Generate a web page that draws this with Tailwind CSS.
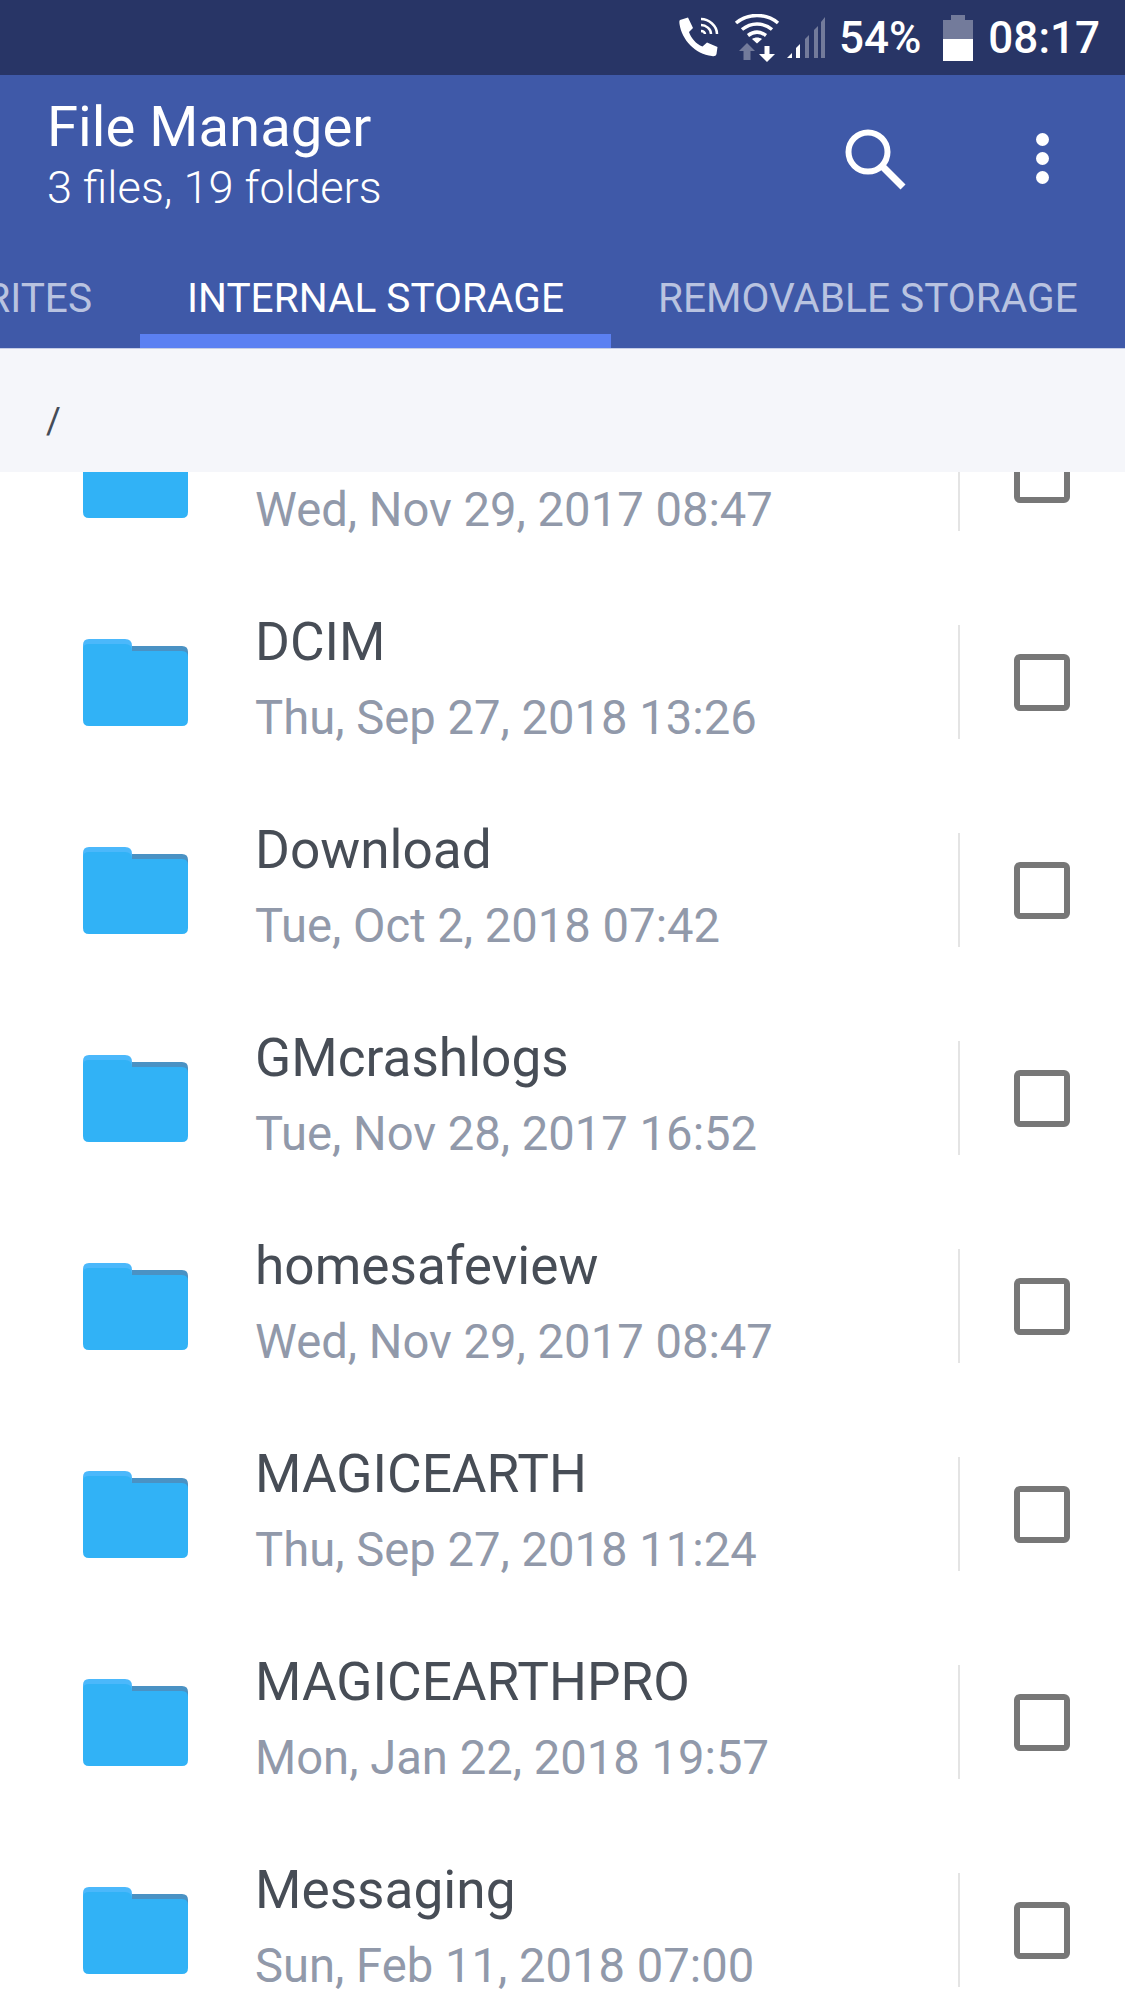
<!doctype html>
<html lang="en">
  <head>
    <meta charset="UTF-8" />
    <title>File Manager</title>
    <script src="https://cdn.jsdelivr.net/npm/@tailwindcss/browser@4"></script>
  </head>
  <body>
    <div class="flex flex-col h-[2000px] overflow-hidden bg-white font-['Roboto',sans-serif]">
      <div class="flex items-center justify-end h-[75px] shrink-0 bg-[#283566] text-white pr-[25px]">
        <svg class="w-[40px] h-[40px] mt-[-1px]" viewBox="0 0 40 40" fill="none">
          <path fill="#fff" d="M1 3 L9 0.5 L14 11 L10 15 C12 21 17 27 23.5 29.5 L28 25.5 L38.5 30 L37.5 37 C37 39 35 39.5 33 39 C16 37 3 23 0.5 7 C0.4 5 0 4 1 3 Z" />
          <path stroke="#fff" stroke-width="2.5" d="M22 2 C30 2 38 9 38 17 M22 8 C27 8 32 12 32 17 M22 14 C24.500 14 26 15.500 26 17" />
        </svg>
        <svg class="w-[46px] h-[48px] ml-[15px]" viewBox="0 0 46 48" fill="none">
          <path stroke="#fff" stroke-width="3.500" d="M2 9 C14 -1 32 -1 44 9 M8 15.500 C17 8 29 8 38 15.500 M14 21.500 C20 17 26 17 32 21.500" />
          <path fill="#fff" d="M18 25 C21 23 25 23 28 25 L23 29.500 Z" />
          <path fill="#fff" fill-opacity="0.35" d="M13 29 L21 37 L16.500 37 L16.500 46 L9.500 46 L9.500 37 L5 37 Z" />
          <path fill="#fff" d="M30.500 32 L35.500 32 L35.500 40 L41 40 L33 48 L25 40 L30.500 40 Z" />
        </svg>
        <svg class="w-[38px] h-[41px] ml-[7px]" viewBox="0 0 38 41" fill="#fff">
          <path d="M0 41 L5 36 L5 41 Z" />
          <path d="M9 41 L9 31 L13 27 L13 41 Z" />
          <path fill-opacity="0.35" d="M18 41 L18 22 L22 18 L22 41 Z M27 41 L27 13 L31 9 L31 41 Z M34 41 L34 5 L38 0 L38 41 Z" />
        </svg>
        <span class="ml-[14px] text-[44px] font-medium leading-none">54%</span>
        <svg class="w-[30px] h-[46px] ml-[22px]" viewBox="0 0 30 46" fill="#fff">
          <path fill-opacity="0.35" d="M8 0 L22 0 L22 5 L30 5 L30 24 L0 24 L0 5 L8 5 Z" />
          <rect x="0" y="24" width="30" height="22" />
        </svg>
        <span class="ml-[15px] text-[44px] font-medium leading-none">08:17</span>
      </div>

      <header class="shrink-0 h-[273px] bg-[#3f59a8] flex flex-col text-white">
        <div class="flex items-start h-[178px]">
          <div class="pl-[47px] pt-[18px] flex-1">
            <h1 class="text-[56.3px] leading-[68px]">File Manager</h1>
            <p class="text-[45.2px] leading-[54px] font-light">3 files, 19 folders</p>
          </div>
          <svg class="w-[64px] h-[64px] mt-[53px] mr-[128px]" viewBox="0 0 64 64" fill="none" stroke="#fff">
            <circle cx="24" cy="24" r="19.500" stroke-width="6" />
            <path d="M38 38 L59 59" stroke-width="7" />
          </svg>
          <div class="flex flex-col gap-[6px] mt-[58px] mr-[76px]">
            <div class="w-[13px] h-[13px] rounded-full bg-white"></div>
            <div class="w-[13px] h-[13px] rounded-full bg-white"></div>
            <div class="w-[13px] h-[13px] rounded-full bg-white"></div>
          </div>
        </div>
        <nav class="flex h-[95px] text-[40.6px] whitespace-nowrap">
          <div class="w-[140px] shrink-0 flex justify-end pr-[48px] pt-[15px] overflow-hidden text-[#b9c3e0]">FAVORITES</div>
          <div class="w-[471px] shrink-0 flex justify-center pt-[15px] border-b-[14px] border-[#5b80f2]">INTERNAL STORAGE</div>
          <div class="pl-[47px] pt-[15px] text-[#b9c3e0]">REMOVABLE STORAGE</div>
        </nav>
      </header>

      <div class="relative z-10 shrink-0 h-[124px] bg-[#f5f6fa] border-t border-[#c5cde6] flex items-center pl-[46px] pt-[20px] text-[#454c57] text-[36px]">/</div>

      <ul id="rows" class="mt-[-102px]"></ul>
    </div>

    <script>
      const folders = [
        ['\u00a0', 'Wed, Nov 29, 2017 08:47'],
        ['DCIM', 'Thu, Sep 27, 2018 13:26'],
        ['Download', 'Tue, Oct 2, 2018 07:42'],
        ['GMcrashlogs', 'Tue, Nov 28, 2017 16:52'],
        ['homesafeview', 'Wed, Nov 29, 2017 08:47'],
        ['MAGICEARTH', 'Thu, Sep 27, 2018 11:24'],
        ['MAGICEARTHPRO', 'Mon, Jan 22, 2018 19:57'],
        ['Messaging', 'Sun, Feb 11, 2018 07:00'],
      ];
      const rows = document.getElementById('rows');
      folders.forEach(([name, date]) => {
        const li = document.createElement('li');
        li.className = 'flex items-center h-[208px]';
        li.innerHTML = `
          <svg class="w-[105px] h-[88px] ml-[83px] mt-[1px] shrink-0" viewBox="0 0 105 88">
            <path fill="#4a92c4" d="M45 7 L99 7 Q105 7 105 13 L105 20 L45 20 Z" />
            <path fill="#4bb8fb" d="M6 0 L42 0 Q49 0 49 7 L49 14 L0 14 L0 6 Q0 0 6 0 Z" />
            <path fill="#31b2f6" d="M0 10 Q0 5 6 5 L42 5 Q49 5 49 12 L99 12 Q105 12 105 18 L105 81 Q105 87 99 87 L6 87 Q0 87 0 81 Z" />
          </svg>
          <div class="flex-1 pl-[67px] pb-[12px]">
            <div class="text-[#474d56] text-[53.2px] leading-[74px]">${name}</div>
            <div class="text-[#9199aa] text-[47.2px] leading-[58px] mt-[10px]">${date}</div>
          </div>
          <div class="w-[2px] h-[114px] bg-[#e4e4e4]"></div>
          <div class="w-[56px] h-[57px] ml-[54px] mr-[55px] border-[6px] border-[#777777] rounded-[6px]"></div>
        `;
        rows.appendChild(li);
      });
    </script>
  </body>
</html>
